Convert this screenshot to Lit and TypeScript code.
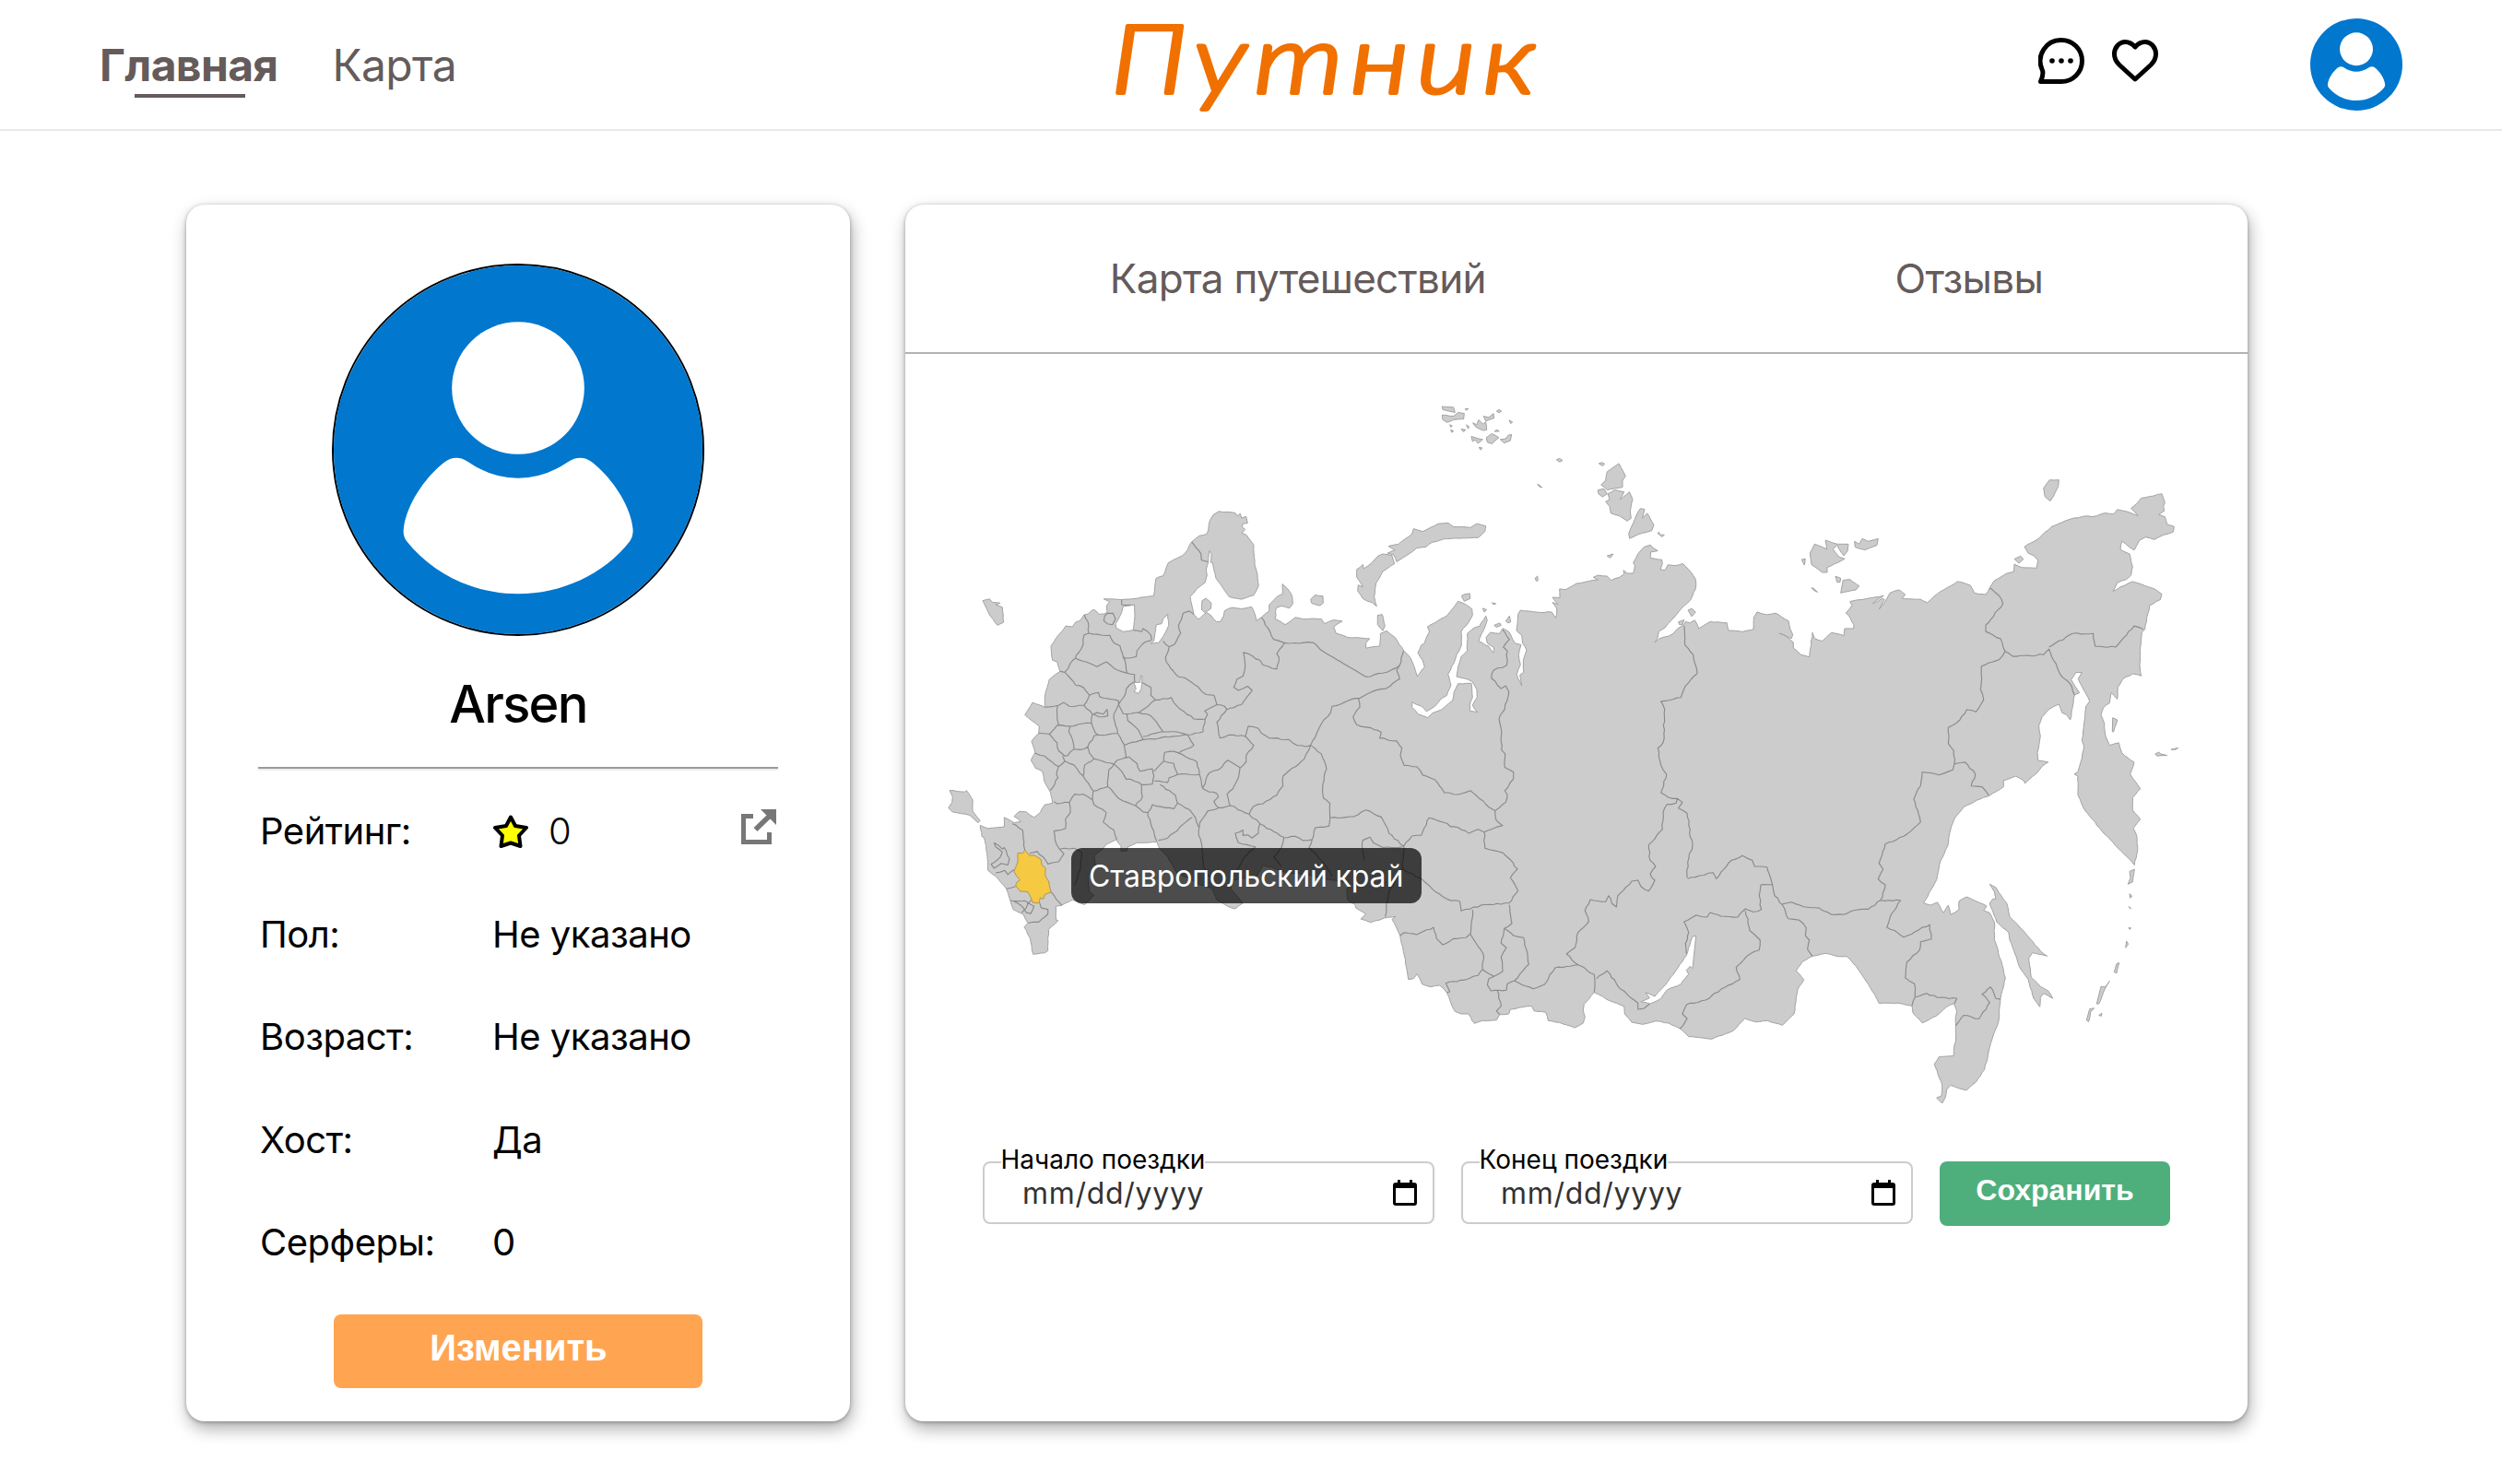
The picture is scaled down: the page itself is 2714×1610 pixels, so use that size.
import { LitElement, html, svg, css } from "lit";
import { customElement, property } from "lit/decorators.js";

/* ---------- map geometry ---------- */

// Each map sheet: origin x, origin y, horizontal and vertical scale.
type Sheet = [number, number, number, number];
const A: Sheet = [1000, 520, 1 / 3, 540 / 1568];
const B: Sheet = [1400, 420, 1 / 3, 660 / 1568];
const C: Sheet = [1800, 480, 1 / 3, 660 / 1568];
const D: Sheet = [2080, 500, 1 / 3, 720 / 1568];
const E: Sheet = [1480, 900, 1 / 3, 1 / 3];

type Pt = [number, number];

const place = ([ox, oy, sx, sy]: Sheet, text: string): Pt[] =>
  text.trim().split(/\s+/).map((pair) => {
    const [x, y] = pair.split(",").map(Number);
    return [ox + x * sx, oy + y * sy] as Pt;
  });

// Repeatable pseudo-random offset in -1..1 for a pair of coordinates.
const noise = (x: number, y: number) => {
  const v = Math.sin(x * 12.9898 + y * 78.233) * 43758.5453;
  return (v - Math.floor(v)) * 2 - 1;
};

// Breaks long segments into short uneven steps, as on a natural border.
const rough = (pts: Pt[], amount: number): Pt[] => {
  const out: Pt[] = [];
  pts.forEach((p, i) => {
    out.push(p);
    const q = pts[i + 1];
    if (!q) return;
    const dx = q[0] - p[0];
    const dy = q[1] - p[1];
    const len = Math.hypot(dx, dy);
    const n = Math.floor(len / 4);
    for (let k = 1; k < n; k++) {
      const t = k / n;
      const o = noise(p[0] + k, p[1] - k) * amount;
      out.push([p[0] + dx * t - (dy / len) * o, p[1] + dy * t + (dx / len) * o]);
    }
  });
  return out;
};

const line = (pts: Pt[]) => "M" + pts.map(([x, y]) => `${x.toFixed(1)} ${y.toFixed(1)}`).join("L");
const lines = (sheet: Sheet, list: string[], amount = 0.8) =>
  list.map((t) => line(rough(place(sheet, t), amount))).join("");
const shapes = (sheet: Sheet, list: string[], amount = 0.4) =>
  list.map((t) => line(rough(place(sheet, t), amount)) + "Z").join("");

const MAINLAND =
  line(
    rough(
      [
        ...place(A, `528,427 541,424 556,411 565,413 576,425 592,424 603,420 601,398 611,386 592,377 650,379 690,376 754,368 762,312 785,304 802,263 818,254 848,240 865,222 878,197 902,178 928,172 937,130 948,112 966,101 1000,103 1020,106 1026,116 1036,108 1040,122 1055,117 1060,138 1045,140 1042,150 1052,158 1041,170 1056,175 1080,208 1083,270 1092,300 1096,335 1080,365 1040,378 1000,370 985,350 957,312 950,284 946,262 940,262 942,235 936,225 932,260 925,285 928,302 922,325 895,345 873,370 878,395 885,425 898,440 905,438 918,425 928,420 942,430 958,448 972,448 982,430 985,414 1010,404 1040,408 1073,402 1080,415 1089,445 1105,435 1130,415 1130,395 1155,370 1175,360 1173,330 1190,345 1205,368 1207,392 1196,406 1170,399 1153,405 1150,440 1182,458 1215,435 1240,440 1300,440 1310,455 1340,443 1368,447 1340,465 1348,485 1385,498 1430,500 1457,502 1445,515 1445,532 1465,528 1490,525`),
        ...place(B, `292,635 302,632 312,628 340,645 368,680 390,698 403,722 412,745 436,722 430,705 414,684 425,665 436,660 445,640 452,630 445,618 510,588 545,552 565,558 590,572 592,588 580,605 555,630 556,665 540,690 532,710 512,740 522,768 508,795 490,803 470,822 442,836 425,822 395,812 395,825 415,843 446,852 462,840 490,832 515,815 527,808 532,785 545,764 588,763 592,800 583,818 584,835 608,838 592,820 607,800 606,780 590,758 572,752 540,746 545,720 555,695 575,680 576,650 575,635 598,620 615,616 635,590 640,600 635,612 622,635 612,655 645,668 660,685 662,672 640,660 636,645 650,632 680,635 690,622 712,632 730,660 750,664 742,690 748,715 736,740 752,770 746,742 758,735 757,705 768,678 755,660 752,640 735,628 738,610 740,585 748,575 800,580 850,580 862,595 866,585 866,570 852,555 870,560 852,542 876,543 875,520 895,522 930,506 970,500 1000,497 985,490 1000,485 1030,487 1043,498 1070,490 1085,482 1083,472 1095,480 1115,480 1120,460 1115,452 1130,430 1150,412 1170,407 1195,422 1172,425 1170,440 1208,445 1210,455 1203,470 1218,472 1228,458 1250,460 1276,455 1295,470 1318,495 1318,520 1300,550 1270,572 1240,600 1218,620 1198,630 1195,645 1185,658 1200,648 1230,642 1245,635 1260,622 1280,612`),
        ...place(C, `85,462 100,465 115,458 128,480 165,462 220,465 225,485 270,488 306,482 308,450 318,437 350,444 378,440 420,460 425,480 434,495 430,505 418,502 390,492 415,500 436,515 436,530 460,547 488,553 498,490 505,505 530,512 560,490 600,498 603,480 632,480 633,470 615,445 607,440 627,420 620,410 660,405 730,395 700,410 695,415 725,402 733,405 715,430 735,410 750,388 780,380 800,392 790,402 850,404`),
        ...place(D, `32,335 65,314 130,285 172,294 185,312 222,316 235,300 250,283 290,266 313,262 315,244 340,252 388,253 392,235 380,225 360,218 348,203 395,183 435,156 495,138 550,130 570,132 610,123 640,125 650,115 690,122 718,130 695,112 712,102 728,88 795,78 805,98 800,108 803,118 785,127 805,132 812,150 835,155 832,168 800,175 770,186 742,180 722,188 705,211 688,203 665,190 660,210 690,220 700,250 695,270 680,280 650,288 636,308 660,298 700,285 740,295 770,302 795,315 790,328 755,342 740,398 730,405 725,440 724,490 728,508 700,503 668,515 652,535 650,563 630,548 625,572 605,583 597,600 608,620 612,650 625,672 655,666 665,690 705,712 692,740 725,775 700,795 700,825 725,847 702,868 713,885 716,920 706,955 680,935 600,875 540,820 522,790 522,745 510,740 522,735 532,710 542,675 535,660 545,600 548,580 560,568 540,540 523,515 535,500 515,500 500,517 515,535 527,548 511,553 497,612 485,600 470,595 460,575 432,585 405,605 395,625 400,650 390,690 392,708 425,712 405,722 385,740 350,762 345,755 320,745 280,755 280,770 232,792 215,795 150,818 120,845 108,870 98,910 75,945 62,990 20,1045 42,1050 65,1043 85,1068 100,1050 108,1072 135,1060 135,1040 160,1030 190,1040 225,1052 215,1062 235,1068 250,1090 250,1130 275,1190 286,1222 270,1270 265,1320 235,1385 218,1438 190,1468 160,1487 125,1480 108,1475 95,1485 90,1505 80,1518 62,1505 78,1500 80,1475 55,1425 70,1408 118,1405 120,1380 125,1370 124,1315 128,1300 118,1282 95,1290 60,1312 15,1328`),
        ...place(C, `825,1470 822,1452 775,1445 715,1446 700,1422 672,1388 640,1350 610,1325 580,1325 543,1317`),
        ...place(E, `1458,412 1425,430 1405,460 1430,488 1410,520 1398,600 1360,637 1312,622 1272,626 1238,614 1200,655 1130,682 1055,674 1027,648 990,630 948,623 905,634 870,627 847,600 845,575 800,558 748,530 715,568 712,590 718,610 712,630 685,645 635,628 598,622 590,595 552,590 545,575 530,575 475,585 470,600 440,602 430,620 385,622 358,631 338,600 315,600 295,592 280,560 268,530 245,507 215,512 188,503 172,470 160,485 143,488 130,410 116,345 90,292 102,283 65,288 20,302`),
        ...place(A, `1428,1385 1445,1370 1412,1350 1410,1340 1385,1325 1382,1290 1405,1275 1330,1262 1250,1245 1190,1240 1110,1215 1090,1250 1010,1262 1005,1290 1045,1335 1020,1353 995,1345 960,1325 945,1290 900,1275 870,1258 830,1240 800,1190 775,1165 765,1142 700,1145 670,1158 668,1170 648,1172 648,1155 632,1135 600,1150 588,1165 560,1185 565,1225 540,1250 545,1300 560,1310 530,1340 490,1325 455,1342 436,1345 437,1388 443,1390 412,1418 410,1485 400,1492 362,1496 352,1445 333,1410 345,1398 330,1370 297,1355 288,1328 275,1290 240,1250 215,1232 212,1180 203,1130 195,1125 190,1090 215,1100 245,1097 268,1095 268,1065 300,1082 322,1078 300,1062 315,1047 340,1048 365,1065 385,1050 400,1025 425,1020 418,985 398,950 392,920 370,910 355,885 368,862 357,825 380,800 382,778 335,742 360,703 400,718 400,685 408,655 415,630 450,605 440,575 425,570 420,525 445,490 468,462 490,465 500,450 515,445 528,427`),
      ],
      0.45,
    ),
  ) + "Z";

const ISLANDS =
  shapes(A, [
    "198,382 220,377 230,388 255,390 240,395 262,403 266,450 246,460 222,430",
    "90,980 140,985 145,980 165,1010 165,1045 190,1075 183,1082 155,1058 100,1048 86,1035 98,1018 100,1000",
    "1265,378 1280,364 1305,368 1306,390 1295,398 1268,390",
    "910,410 912,382 925,375 942,390 940,408 920,420",
  ]) +
  shapes(B, [
    "215,470 235,457 238,468 265,452 285,435 300,430 330,434 338,455 300,475 278,505 272,540 280,565 265,555 250,552 235,545 218,525 220,510 235,515 222,498 215,490",
    "318,410 350,405 375,390 395,378 400,365 430,372 480,352 512,350 530,360 585,362 605,352 635,358 632,372 610,388 500,391 460,400 440,412 410,415 385,430 365,440 345,450 335,432 315,428 340,420",
    "283,588 298,586 307,615 300,628 283,612",
    "556,538 565,534 583,532 584,545 565,552",
    "625,570 638,574 630,580",
    "655,556 668,558 660,560",
    "662,614 680,608 685,614 670,619",
    "700,603 712,590 716,605 708,608",
    "795,493 803,487 805,498 800,500",
    "493,50 530,52 535,65 515,62 495,58",
    "493,72 530,75 545,65 565,68 563,82 530,84 510,91 495,84",
    "518,97 526,100 521,103",
    "521,110 530,113 524,117",
    "555,108 570,110 562,115",
    "568,56 578,55 572,60",
    "572,97 582,103 577,107",
    "593,92 605,97 612,84 625,95 635,90 638,110 628,112 615,108 600,101",
    "628,75 645,78 660,68 662,80 645,84 635,88",
    "670,62 678,58 686,62 678,66",
    "588,127 600,130 625,135 610,145 600,136 592,140",
    "637,130 655,120 678,130 655,146 640,142",
    "682,135 700,133 708,124 719,122 715,138 695,144",
    "711,85 722,90 716,94",
    "613,155 624,157 618,162",
    "663,114 672,110 679,114",
    "1068,197 1090,230 1080,240 1080,258 1030,265 1010,252 1025,240 1030,218",
    "1000,265 1020,262 1030,275 1015,283 1002,275",
    "1032,275 1055,265 1085,270 1072,290 1102,270 1113,290 1105,320 1108,338 1095,345 1070,332 1042,325 1038,308 1025,295 1038,290",
    "1128,325 1138,313 1152,315 1145,338 1160,325 1182,355 1175,370 1130,380 1103,390 1100,378 1115,350",
    "1003,197 1012,194 1022,198 1015,203",
    "865,187 875,184 885,189 875,193",
    "803,250 812,254 818,259 810,257",
    "1195,376 1200,374 1198,380",
    "1200,380 1216,381 1208,386",
    "1030,435 1050,430 1040,440",
    "1293,575 1305,571 1318,580 1305,591",
    "1262,605 1280,600 1275,612 1265,612",
  ]) +
  shapes(C, [
    "490,285 505,262 545,275 540,252 580,262 615,262 612,280 600,292 578,265 565,275 585,295 603,300 580,310 546,322 546,335 530,335 495,315",
    "635,255 650,262 660,248 680,255 712,248 708,265 670,277 637,270",
    "598,355 620,353 650,370 640,380 590,388",
    "573,345 590,350 588,360 578,360",
    "463,302 475,300 472,316",
    "495,374 505,378 515,386 502,381",
  ]) +
  shapes(D, [
    "410,65 430,45 460,45 458,60 448,75 432,95 415,85",
    "315,232 335,225 345,232 330,242",
    "235,1000 255,1008 265,1020 290,1045 300,1077 350,1115 400,1158 422,1170 375,1162 362,1175 370,1220 400,1242 425,1252 440,1270 410,1258 400,1268 398,1290 378,1270 360,1225 335,1200 300,1132 297,1115 258,1090 235,1045 245,1035 255,1035 250,1018",
    "690,970 706,965 700,995 685,1000 693,985",
    "690,1023 698,1028 692,1033",
    "688,1053 695,1058 690,1056",
    "687,1103 695,1104 690,1107",
    "680,1135 686,1142 677,1150",
    "648,1188 656,1186 648,1210 640,1208",
    "597,1242 610,1243 625,1229 608,1250 590,1283 583,1283",
    "560,1295 575,1293 563,1302 557,1325 550,1322",
    "590,1310 600,1305 598,1312",
    "773,693 785,688 790,692 812,696 780,697",
    "825,682 848,678 840,682",
    "635,607 650,612 638,640 634,640",
  ]);

const LAKES =
  shapes(A, [
    "655,400 692,395 693,430 688,475 655,480 632,468 630,455 650,420",
    "763,458 780,455 785,440 800,425 803,460 785,495 770,515 745,518 755,508",
    "690,640 693,640 697,640 710,640 713,618 717,620 714,660 705,675 690,668 697,660",
  ]) +
  shapes(E, ["1079,346 1068,348 1055,385 1048,410 1020,450 980,505 945,543 915,530 928,548 900,560 930,567 965,550 985,522 1030,503 1055,470 1048,458 1060,445 1068,452"]);

const BORDERS =
  lines(A, [
    "878,197 908,235 910,255 932,260",
    "528,427 541,450 543,485 528,490 525,520 502,555 500,563 483,580 465,608 450,605",
    "543,485 570,488 612,492 625,515 645,525 655,560 662,563 698,558 700,540 728,512 745,508",
    "655,560 660,568 667,610 692,615 693,640",
    "500,563 570,590 600,575 625,595 667,610",
    "465,608 500,648 525,655 545,680 527,712 480,715 462,703 445,712 400,718",
    "545,680 575,672 578,685 640,698 640,710 625,740 628,765 637,800 575,805 565,800 552,768",
    "527,712 555,740 552,768 520,770 482,778 445,773 440,740 442,712",
    "650,379 650,395 692,397",
    "688,475 715,480 720,470 745,490 748,508",
    "595,430 605,422 622,422 630,440 620,458 603,455 592,445 595,430",
    "885,425 870,415 850,422 845,440 835,460 842,485 822,520 805,528 785,510",
    "805,528 793,560 795,575 835,622 855,625 900,655 925,678 950,680 960,710 985,715 992,725",
    "690,638 665,660 658,685 640,710 655,738 705,735 760,695 745,680 745,655 718,640",
    "760,695 812,688 830,715 885,755 922,755 915,795 865,805 825,795 785,795 770,775 745,745 705,735",
    "667,738 670,760 705,790 720,820 660,838 637,800",
    "720,810 785,795",
    "922,755 930,740 920,730 960,710",
    "992,725 1040,710 1075,665 1060,652 1030,665 1015,655 1025,630 1045,620 1052,590 1046,545 1100,570 1110,585 1155,598 1162,560 1155,550 1180,515",
    "1105,435 1145,505 1180,515 1240,515 1275,515 1310,545",
    "992,725 960,765 970,815 1000,805 1053,810 1080,838 1055,870 1055,890 1035,910 1030,940 1012,975 993,992 1000,1022 1005,1028",
    "1053,810 1062,778 1095,785 1105,800 1130,815 1195,820 1220,838 1250,842 1265,838",
    "1265,838 1245,880 1175,935 1175,965 1155,995 1110,1022 1080,1030 1065,1055",
    "1265,838 1285,800 1300,770 1330,735 1335,715 1370,705",
    "1265,838 1300,865 1317,912 1305,960 1307,1005 1328,1022 1328,1070 1325,1092 1280,1098 1270,1135 1240,1138 1215,1125 1178,1128 1145,1110 1100,1085 1065,1055 1005,1028 965,1035 930,1045 905,1080 900,1110 912,1160 915,1220 950,1270",
    "415,803 440,775 482,778",
    "380,800 415,803 440,830 445,855 465,872 475,870 495,850 490,820 478,795 482,778",
    "368,862 400,872 445,905 465,888 458,872",
    "445,905 438,930 443,940 418,980",
    "495,850 515,852 540,843 560,808 575,805",
    "540,843 545,862 560,880 625,897 635,885 665,875 658,838",
    "465,888 495,900 525,935 558,982 605,968 608,915 625,897",
    "525,935 530,900 560,880",
    "430,1015 440,1022 480,1018 497,992 525,992 555,1010 558,982",
    "480,1018 483,1050 467,1070 467,1100 430,1108 438,1150 448,1165 495,1162 520,1175 515,1230 495,1280",
    "555,1010 560,1025 600,1050 590,1080 625,1105 635,1135",
    "605,968 640,1005 695,1028 720,1048 735,1050 745,1085 765,1140",
    "625,897 650,920 665,945 680,945 715,962 750,960 755,935 750,912 710,920 700,895 675,875 662,878",
    "715,962 718,1000 695,1028",
    "735,1050 750,1025 820,1038 832,1020 825,995 775,962",
    "720,820 865,805 885,838 860,850 835,862 820,857 790,860 787,888 755,920",
    "787,888 820,895 832,930 805,940 800,955 755,950",
    "835,862 870,880 895,890 903,930 832,930",
    "903,930 915,975 935,985 960,990 965,1000 950,1015 965,1035",
    "915,970 935,925 965,915 995,885 1035,908",
    "832,1020 870,1040 890,1065 900,1095",
    "770,1137 800,1130 880,1065",
    "1178,1128 1170,1160 1145,1190 1170,1220",
    "1100,1085 1095,1115 1075,1130 1060,1120 1045,1122 1045,1105 1020,1115 1030,1145 1085,1158 1050,1190 1005,1262",
    "1270,1135 1260,1160 1300,1200 1335,1250",
    "235,1145 262,1165 268,1160 285,1195 280,1215 258,1210 235,1225 225,1212 255,1190 262,1175 240,1158 235,1145",
    "295,1085 328,1105 332,1140 335,1168",
    "350,1178 375,1172 395,1190 410,1212 445,1205 462,1180 448,1165",
    "240,1240 270,1232 280,1245 300,1230",
    "275,1290 305,1283",
    "288,1328 335,1328 348,1335 355,1325",
    "325,1365 340,1350 345,1335 365,1345 355,1368 340,1365 330,1350 300,1330",
    "345,1398 380,1395 410,1370 410,1355 388,1350 384,1335",
    "420,1300 455,1342",
    "557,740 570,735 590,740 603,725 605,745 575,748 557,740",
  ]) +
  lines(A, ["1310,545 1445,622"], 0.1) +
  lines(B, [
    "245,747 300,737 330,728 355,717",
    "170,814 210,802 225,802 265,785 310,777 355,752 345,730 355,717 368,680",
    "220,802 225,825 203,850 215,870 260,878 295,890 290,905 345,912 362,930 357,950 370,975 410,978 430,1000 470,1012 500,1045 545,1050 585,1040 635,1075 665,1092 668,1115 690,1130 630,1147",
    "665,1092 700,1070 705,1050 697,1040 725,1010 725,992 697,980 698,945 686,935 685,880 678,855 697,830 710,785 700,770 685,777 653,750 660,730 703,717 705,680 692,670 712,650 690,625",
    "130,1110 205,1107 245,1090 295,1108 320,1150 368,1183 395,1157 425,1155 450,1110 510,1125 520,1133 545,1135 580,1150 610,1140 630,1147 632,1188 690,1200 715,1218 738,1242 715,1265 740,1298 710,1330 620,1335 585,1345 555,1350 550,1325 510,1320 470,1300 430,1270 375,1248 365,1240",
    "368,1183 365,1240 320,1300 312,1330 308,1365",
    "240,1220 233,1190 235,1168 258,1160 270,1175 300,1187 365,1185",
  ]) +
  lines(E, [
    "116,345 130,335 170,342 225,318 235,355 255,375 290,355 330,352 345,340 352,262",
    "345,340 370,380 387,405 385,455",
    "472,245 480,305 455,322 445,370 462,385 445,415 450,462 422,478 385,455 370,475 325,490 265,500 278,528 268,530",
    "455,322 485,345 518,352 530,400 535,438 488,492 465,502 462,523 412,525 400,505 405,485 422,478",
    "432,523 445,575 430,590 440,602",
    "488,492 550,518 585,505 620,450 695,440 748,472 748,530",
    "755,485 790,460 835,520 890,565 890,585 910,582 928,568",
    "695,440 658,405 685,385 695,335 730,300 718,265 735,228 785,235 795,215 805,240 820,252 825,215 870,168 890,165 900,185 925,200 945,165 930,145 948,120 930,100 925,50",
    "1052,160 1090,150 1135,140 1145,160 1195,100 1230,85 1262,100 1270,120 1310,122 1328,180 1335,215 1360,245 1380,290 1415,295 1438,320 1435,345 1448,360 1442,390 1458,412",
    "1328,180 1290,180 1285,215 1292,260 1265,268 1240,258 1215,285 1160,282 1125,270 1115,285 1080,278 1040,300 1055,335 1045,370 1048,405",
    "1240,265 1255,330 1288,360 1285,392 1255,405 1210,448 1222,488 1160,520 1110,555 1048,570 1035,600 1050,615 1027,648",
  ]) +
  lines(B, [
    "1165,1180 1210,1140 1212,1095 1225,1075 1255,1072 1258,1060 1230,1058 1205,1045 1223,998 1205,975 1195,930 1213,915 1217,830 1205,810 1270,800 1285,770 1323,738 1310,690 1283,665 1280,615",
    "1258,1060 1275,1070 1262,1085 1290,1098 1300,1140 1298,1150 1308,1180 1292,1225 1290,1265",
  ]) +
  lines(C, [
    "400,1190 430,1185 470,1197 520,1200 560,1217 600,1217 640,1205 680,1203 720,1180 785,1180 755,1215 740,1250 765,1258 795,1275 880,1243 885,1280 850,1287 847,1308 805,1340 800,1380 830,1395 832,1430 822,1452",
    "720,1180 735,1140 712,1125 728,1100 715,1085 735,1035 795,1015 850,978 828,920 850,885 855,850",
  ]) +
  lines(D, [
    "14,735 70,742 115,730 120,715 118,685 100,668 100,630 138,612 160,588 190,593 215,565 205,540 208,485 265,470 285,450 270,420 222,403 222,388 278,338 265,318 235,300",
    "285,450 310,462 410,458 428,445 465,505 495,525 511,553",
    "428,440 505,408 572,408 578,438 645,440 705,390 735,398",
    "118,717 155,712 188,740 175,768 210,770 232,790",
    "-8,1267 30,1258 65,1268 128,1270 120,1282",
    "124,1335 150,1310 200,1318 235,1280 210,1260 238,1243 255,1270 270,1272",
  ]);

const STAVROPOL = shapes(A, [
  "312,1177 328,1178 335,1168 350,1185 368,1185 388,1198 390,1215 403,1225 402,1250 412,1265 421,1300 400,1308 395,1322 385,1318 382,1335 360,1333 355,1318 345,1300 320,1298 305,1280 308,1270 320,1262 308,1250 300,1235 312,1205",
]);

/* ---------- elements ---------- */

@customElement("user-avatar")
class UserAvatar extends LitElement {
  static styles = css`
    :host {
      display: block;
    }
    .picture {
      display: block;
      width: 100%;
      height: 100%;
    }
  `;
  render() {
    return html`<svg class="picture" viewBox="66 83 1200 1200">
      <circle cx="666" cy="683" r="600" fill="#0177ce" />
      <circle cx="666" cy="482" r="215.5" fill="#fff" />
      <path
        fill="#fff"
        d="M293 945C300 860 370 765 428 722Q445 709 465 709Q485 709 503 722Q580 775 666 775Q752 775 829 722Q848 709 868 709Q888 709 905 722C962 765 1034 860 1040 945Q1040 965 1030 980C945 1090 805 1152 666 1152C527 1152 390 1090 303 980Q292 965 293 945Z"
      />
    </svg>`;
  }
}

@customElement("date-field")
class DateField extends LitElement {
  @property() label = "";
  static styles = css`
    :host {
      display: block;
      width: 490px;
    }
    .field {
      position: relative;
      box-sizing: border-box;
      height: 68px;
      display: flex;
      align-items: center;
      justify-content: space-between;
      padding: 0 17px 0 41px;
      border: 2px solid #ccc;
      border-radius: 8px;
    }
    .label {
      position: absolute;
      left: 17.5px;
      top: -21px;
      background: #fff;
      font-size: 28px;
      line-height: 34px;
      color: #000;
      white-space: nowrap;
    }
    .value {
      font-size: 32px;
      line-height: 40px;
      padding-top: 2px;
      letter-spacing: 0.7px;
      color: #333;
    }
    .calendar {
      width: 26px;
      height: 28px;
    }
  `;
  render() {
    return html`<div class="field">
      <span class="label">${this.label}</span>
      <span class="value">mm/dd/yyyy</span>
      <svg class="calendar" viewBox="0 0 26 28">
        <path fill="#000" fill-rule="evenodd" d="M3 3H5V0H8V3H18V0H21V3H23Q26 3 26 6V25Q26 28 23 28H3Q0 28 0 25V6Q0 3 3 3ZM3 9V25H23V9Z" />
      </svg>
    </div>`;
  }
}

@customElement("travel-map")
class TravelMap extends LitElement {
  static styles = css`
    :host {
      display: block;
      position: relative;
      height: 846px;
    }
    .map {
      display: block;
      width: 1456px;
      height: 846px;
    }
    .land {
      fill: #ccc;
      stroke: #a3a3a3;
      stroke-width: 1;
      stroke-linejoin: round;
    }
    .lake {
      fill: #fff;
      stroke: #a3a3a3;
      stroke-width: 1;
    }
    .border {
      fill: none;
      stroke: #8a8a8a;
      stroke-width: 1.15;
      stroke-linejoin: round;
    }
    .active {
      fill: #f5c942;
      stroke: #a9975c;
      stroke-width: 1;
    }
    .tooltip {
      position: absolute;
      left: 180px;
      top: 536px;
      box-sizing: border-box;
      width: 380px;
      height: 60px;
      padding: 0 0 0 19px;
      border-radius: 12px;
      background: rgba(0, 0, 0, 0.7);
      color: #fff;
      font-size: 32px;
      line-height: 61px;
      letter-spacing: -0.15px;
      white-space: nowrap;
    }
  `;
  render() {
    return html`<svg class="map" viewBox="982 384 1456 846">
        ${svg`<path class="land" d=${MAINLAND} />
        <path class="land" d=${ISLANDS} />
        <path class="border" d=${BORDERS} />
        <path class="lake" d=${LAKES} />
        <path class="active" d=${STAVROPOL} />`}
      </svg>
      <div class="tooltip">Ставропольский край</div>`;
  }
}

@customElement("app-root")
class AppRoot extends LitElement {
  static styles = css`
    :host {
      display: block;
      height: 1610px;
      overflow: hidden;
      background: #fff;
      font-family: Inter, "Liberation Sans", sans-serif;
      color: #000;
    }
    .header {
      display: grid;
      grid-template-columns: 1208px 460px 1fr;
      height: 140px;
      border-bottom: 2px solid #e9e7ee;
    }
    .nav {
      display: flex;
      gap: 59px;
      padding: 42px 0 0 108px;
      font-size: 48px;
      line-height: 58px;
      letter-spacing: -0.65px;
      color: #655b5b;
    }
    .link {
      display: flex;
      flex-direction: column;
      align-items: center;
      height: 64px;
    }
    .link.current {
      font-weight: 700;
    }
    .link.current::after {
      content: "";
      width: 120px;
      height: 4px;
      margin: 2px 0 0 2px;
      background: #655b5b;
    }
    .logo {
      width: 470px;
      height: 140px;
      overflow: visible;
      font-family: Lato, "Liberation Serif", serif;
      font-style: italic;
      font-weight: 300;
      font-size: 102px;
      letter-spacing: 7px;
    }
    .tools {
      display: flex;
      align-items: flex-start;
      padding-left: 543px;
    }
    .chat {
      width: 50px;
      height: 50px;
      margin-top: 41px;
    }
    .heart {
      width: 50px;
      height: 46px;
      margin: 43px 0 0 30px;
    }
    .me {
      width: 100px;
      height: 100px;
      margin: 20px 0 0 165px;
    }
    .content {
      display: flex;
      gap: 60px;
      padding: 80px 0 0 202px;
    }
    .card {
      box-sizing: border-box;
      height: 1320px;
      border-radius: 20px;
      background: #fff;
      box-shadow: 2px 8px 18px rgba(0, 0, 0, 0.32), 0 1px 4px rgba(0, 0, 0, 0.3);
    }
    .profile {
      width: 720px;
      display: flex;
      flex-direction: column;
      align-items: center;
      padding-top: 64px;
    }
    .photo {
      box-sizing: border-box;
      width: 404px;
      height: 404px;
      border: 2px solid #000;
      border-radius: 50%;
    }
    .name {
      margin: 40px 0 0;
      font-size: 56px;
      line-height: 68px;
      font-weight: 500;
      letter-spacing: -1.7px;
    }
    .rule {
      box-sizing: border-box;
      width: 564px;
      height: 4px;
      margin-top: 34px;
      border-top: 2px solid #9a9a9a;
      border-bottom: 2px solid #eee;
    }
    .facts {
      width: 560px;
      display: grid;
      grid-template-columns: 252px 1fr auto;
      grid-auto-rows: 48px;
      row-gap: 63.5px;
      align-items: center;
      margin-top: 42px;
      font-size: 40px;
      line-height: 48px;
      letter-spacing: -0.5px;
    }
    .value {
      grid-column: 2 / 4;
    }
    .rating {
      display: flex;
      align-items: center;
      gap: 22px;
      font-weight: 300;
      padding-left: 1px;
    }
    .star {
      width: 38px;
      height: 38px;
    }
    .open {
      width: 38px;
      height: 38px;
      margin-bottom: 11px;
    }
    .button {
      box-sizing: border-box;
      display: block;
      border: 0;
      padding: 0;
      border-radius: 8px;
      color: #fff;
      font-family: "Liberation Sans", Arial, sans-serif;
      font-weight: 700;
      text-align: center;
    }
    .edit {
      width: 400px;
      height: 80px;
      margin-top: 54px;
      padding: 0 0 7px 1px;
      background: #ffa552;
      font-size: 40px;
    }
    .save {
      width: 250px;
      height: 70px;
      padding-bottom: 8px;
      background: #4faf7c;
      font-size: 32px;
    }
    .travels {
      width: 1456px;
    }
    .tabs {
      display: flex;
      justify-content: space-around;
      box-sizing: border-box;
      height: 162px;
      padding-top: 53px;
      border-bottom: 2px solid #b3b3b3;
      font-size: 44px;
      line-height: 54px;
      letter-spacing: -0.7px;
      color: #655b5b;
    }
    .dates {
      display: flex;
      gap: 29px;
      padding: 30px 0 0 84px;
    }
  `;

  render() {
    return html`
      <header class="header">
        <nav class="nav">
          <a class="link current">Главная</a>
          <a class="link">Карта</a>
        </nav>
        <svg class="logo" viewBox="0 0 470 140">
          <defs>
            <linearGradient id="ink" x1="0" y1="0" x2="0" y2="1">
              <stop offset="0" stop-color="#ff7a00" />
              <stop offset="1" stop-color="#e56a00" />
            </linearGradient>
          </defs>
          <text x="-3" y="101" textLength="468" lengthAdjust="spacingAndGlyphs" fill="url(#ink)" stroke="#f07000" stroke-width="4" stroke-linejoin="round">Путник</text>
        </svg>
        <div class="tools">
          <svg class="chat" viewBox="0 0 50 50" fill="none" stroke="#000" stroke-width="5" stroke-linejoin="round">
            <path d="M25 2.500A22.500 22.500 0 0 1 25 47.500H2.500C5 42 6 38 4 34A22.500 22.500 0 0 1 25 2.500Z" />
            <g fill="#000" stroke="none">
              <circle cx="15" cy="25" r="2.800" />
              <circle cx="25" cy="25" r="2.800" />
              <circle cx="35" cy="25" r="2.800" />
            </g>
          </svg>
          <svg class="heart" viewBox="0 0 50 46" fill="none" stroke="#000" stroke-width="5" stroke-linejoin="round">
            <path d="M25 8C21 3.500 18 2.500 14.500 2.500A12 13 0 0 0 2.500 16C2.500 21 4.500 24 8 27.500L25 43L42 27.500C45.500 24 47.500 21 47.500 16A12 13 0 0 0 35.500 2.500C32 2.500 29 3.500 25 8Z" />
          </svg>
          <user-avatar class="me"></user-avatar>
        </div>
      </header>
      <main class="content">
        <section class="card profile">
          <user-avatar class="photo"></user-avatar>
          <h1 class="name">Arsen</h1>
          <div class="rule"></div>
          <div class="facts">
            <span>Рейтинг:</span>
            <span class="rating">
              <svg class="star" viewBox="0 0 38 38">
                <path fill="#ff0" stroke="#000" stroke-width="4" stroke-linejoin="round" d="M19 3.500L24 13L36 15L28 23.500L29.500 35L19 31.500L8.500 35L10 23.500L2 15L14 13Z" />
              </svg>
              <span>0</span>
            </span>
            <svg class="open" viewBox="0 0 38 38">
              <path fill="none" stroke="#777" stroke-width="5" d="M13 7.500H2.500V35.500H30.500V25" />
              <path fill="none" stroke="#777" stroke-width="5.500" d="M15.500 22L32 6" />
              <path fill="#777" d="M21 0H38V17Z" />
            </svg>
            <span>Пол:</span><span class="value">Не указано</span>
            <span>Возраст:</span><span class="value">Не указано</span>
            <span>Хост:</span><span class="value">Да</span>
            <span>Серферы:</span><span class="value">0</span>
          </div>
          <button class="button edit">Изменить</button>
        </section>
        <section class="card travels">
          <div class="tabs">
            <span>Карта путешествий</span>
            <span>Отзывы</span>
          </div>
          <travel-map></travel-map>
          <div class="dates">
            <date-field label="Начало поездки"></date-field>
            <date-field label="Конец поездки"></date-field>
            <button class="button save">Сохранить</button>
          </div>
        </section>
      </main>
    `;
  }
}
